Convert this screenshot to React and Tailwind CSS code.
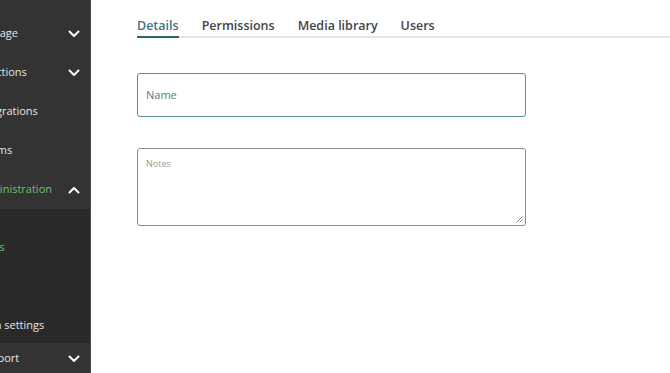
import React from "react";

function Chevron({ up }) {
  return (
    <svg width="12" height="8" viewBox="0 0 12 8" className="shrink-0">
      <path
        d={up ? "M1.5 6.5 L6 2 L10.5 6.5" : "M1.5 1.5 L6 6 L10.5 1.5"}
        fill="none"
        stroke="#ffffff"
        strokeWidth="2"
        strokeLinecap="round"
        strokeLinejoin="round"
      />
    </svg>
  );
}

function NavItem({ label, shift, chevron, up, active, h = "h-[39px]" }) {
  return (
    <div className={`flex shrink-0 items-center ${h} pr-[10px]`}>
      <div className="flex-1 overflow-hidden">
        <span
          className={`block whitespace-nowrap text-[11px] ${shift} ${
            active ? "text-[#6fbf73]" : "text-[#e6e6e6]"
          }`}
        >
          {label}
        </span>
      </div>
      {chevron && <Chevron up={up} />}
    </div>
  );
}

export default function App() {
  return (
    <div
      className="flex h-[373px] w-[670px] overflow-hidden bg-white"
      style={{ fontFamily: '"Open Sans", "Liberation Sans", sans-serif' }}
    >
      <aside className="flex h-full w-[91px] shrink-0 flex-col overflow-hidden border-r border-[#4a4a4a] bg-[#333333] pt-[14px]">
        <NavItem label="Manage" shift="ml-[-23px]" chevron />
        <NavItem label="Collections" shift="ml-[-29px]" chevron />
        <NavItem label="Integrations" shift="ml-[-24px]" />
        <NavItem label="Forms" shift="ml-[-20px]" />
        <NavItem label="Administration" shift="ml-[-24px]" chevron up active />
        <div className="flex h-[134px] shrink-0 flex-col overflow-hidden bg-[#292929] pt-[19px]">
          <NavItem label="Roles" shift="ml-[-23px]" active />
          <NavItem label="API" shift="ml-[-30px]" />
          <NavItem label="Application settings" shift="ml-[-56px]" />
        </div>
        <NavItem label="Support" shift="ml-[-22px]" chevron h="h-[31px]" />
      </aside>

      <main className="flex-1 pl-[46px] pt-[17px]">
        <nav className="flex gap-[23px] border-b-2 border-[#e4e4e4] text-[12.5px] font-semibold">
          <div className="-mb-[2px] border-b-2 border-[#2f6470] text-[#3d7482]">
            Details
          </div>
          <div className="text-[#444444]">Permissions</div>
          <div className="text-[#444444]">Media library</div>
          <div className="text-[#444444]">Users</div>
        </nav>

        <div className="mt-[35px] flex h-[44px] w-[389px] items-center rounded-[3px] border border-[#5b8e98] px-[8px]">
          <span className="text-[11px] text-[#4f7f8a]">Name</span>
        </div>

        <div className="relative mt-[31px] h-[78px] w-[389px] rounded-[3px] border border-[#8c8c8c] px-[8px] pt-[10px]">
          <span className="block text-[9px] leading-none text-[#9a9a9a]">Notes</span>
          <svg
            width="7"
            height="7"
            viewBox="0 0 7 7"
            className="absolute bottom-[2px] right-[2px]"
          >
            <path d="M6.5 0.5 L0.5 6.5 M6.5 3.5 L3.5 6.5" stroke="#8c8c8c" strokeWidth="1" />
          </svg>
        </div>
      </main>
    </div>
  );
}
